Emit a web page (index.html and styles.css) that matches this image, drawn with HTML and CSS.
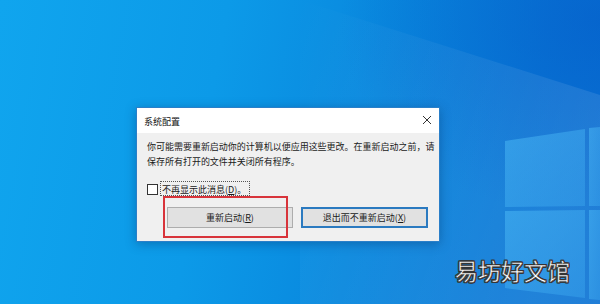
FILE: index.html
```html
<!DOCTYPE html>
<html lang="zh-CN">
<head>
<meta charset="utf-8">
<link rel="stylesheet" href="styles.css">
</head>
<body>
<div class="desktop">
  <svg class="wallpaper" width="600" height="304" viewBox="0 0 600 304">
    <defs>
      <linearGradient id="beam" x1="0" y1="0" x2="1" y2="0.4">
        <stop offset="0" stop-color="#ffffff" stop-opacity="0"/>
        <stop offset="1" stop-color="#ffffff" stop-opacity="0.10"/>
      </linearGradient>
      <linearGradient id="pane" x1="0" y1="0" x2="1" y2="1">
        <stop offset="0" stop-color="#4ab8f5" stop-opacity="0.55"/>
        <stop offset="1" stop-color="#3aa6ee" stop-opacity="0.45"/>
      </linearGradient>
    </defs>
    <polygon points="300,0 600,95 600,304 300,304" fill="url(#beam)"/>
    <polygon points="505,141 585,129 585,206 505,207" fill="url(#pane)"/>
    <polygon points="589,128 600,127 600,206 589,206" fill="url(#pane)"/>
    <polygon points="505,211 585,210 585,298 505,288" fill="url(#pane)"/>
    <polygon points="589,210 600,210 600,300 589,299" fill="url(#pane)"/>
  </svg>

  <div class="dialog">
    <div class="titlebar">
      <span class="title">系统配置</span>
      <svg class="close" width="10" height="10" viewBox="0 0 10 10">
        <path d="M1 1 L9 9 M9 1 L1 9" stroke="#333" stroke-width="1" fill="none"/>
      </svg>
    </div>
    <div class="body">
      <p class="message">你可能需要重新启动你的计算机以便应用这些更改。在重新启动之前，请保存所有打开的文件并关闭所有程序。</p>
      <div class="check-row">
        <span class="checkbox"></span>
        <span class="check-label">不再显示此消息(<u>D</u>)。</span>
      </div>
      <div class="buttons">
        <button class="btn">重新启动(<u>R</u>)</button>
        <button class="btn btn-default">退出而不重新启动(<u>X</u>)</button>
      </div>
    </div>
  </div>

  <div class="highlight"></div>
  <div class="watermark">易坊好文馆</div>
</div>
</body>
</html>
```
FILE: styles.css
```css
html, body {
  margin: 0;
  padding: 0;
}
body {
  width: 600px;
  height: 304px;
  overflow: hidden;
  font-family: "Noto Sans CJK SC", "Noto Sans", sans-serif;
}
.desktop {
  position: relative;
  width: 600px;
  height: 304px;
  background:
    radial-gradient(ellipse 260px 200px at 600px 20px, rgba(5, 90, 200, 0.55), rgba(5, 90, 200, 0)),
    linear-gradient(100deg, #10a5ee 0%, #0c9ae8 35%, #0988de 60%, #0877d6 85%, #0870d3 100%);
}
.wallpaper {
  position: absolute;
  left: 0;
  top: 0;
}
.dialog {
  position: absolute;
  left: 136px;
  top: 107px;
  width: 302px;
  height: 133px;
  border: 1px solid #2a7fc9;
  background: #f0f0f0;
  box-shadow: 0 2px 10px rgba(0, 40, 90, 0.35);
  display: flex;
  flex-direction: column;
}
.titlebar {
  height: 25px;
  background: #ffffff;
  display: flex;
  align-items: center;
  justify-content: space-between;
  padding: 0 7px 0 7px;
  flex: none;
}
.title {
  font-size: 9px;
  color: #111;
  margin-top: 1px;
}
.close {
  margin-top: -2px;
}
.body {
  padding: 6px 0 0 10px;
  display: flex;
  flex-direction: column;
}
.message {
  margin: 0;
  font-size: 9px;
  line-height: 15px;
  color: #1a1a1a;
  letter-spacing: -0.02px;
}
.check-row {
  display: flex;
  align-items: flex-end;
  margin-top: 12px;
  height: 15px;
}
.checkbox {
  width: 9px;
  height: 9px;
  border: 1px solid #333;
  background: #fff;
  flex: none;
  margin-bottom: 1px;
}
.check-label {
  font-size: 9px;
  color: #1a1a1a;
  margin-left: 2px;
  padding: 2px 3px 0 1px;
  border: 1px dotted #555;
  line-height: 11px;
}
.check-label u, .btn u {
  text-decoration: underline;
}
.buttons {
  display: flex;
  gap: 8px;
  margin-top: 11px;
  margin-left: 20px;
}
.btn {
  width: 126px;
  height: 21px;
  font-family: "Noto Sans CJK SC", "Noto Sans", sans-serif;
  font-size: 9px;
  color: #1a1a1a;
  background: #e1e1e1;
  border: 1px solid #adadad;
  padding: 0;
  margin: 0;
}
.btn-default {
  border: 2px solid #2b7ac0;
  width: 127px;
}
.highlight {
  position: absolute;
  left: 163px;
  top: 196px;
  width: 121px;
  height: 38px;
  border: 2px solid #d8343b;
}
.watermark {
  position: absolute;
  left: 455px;
  top: 254px;
  font-size: 23px;
  line-height: 32px;
  color: #ffffff;
  font-family: "Noto Sans CJK SC", sans-serif;
  -webkit-text-stroke: 0.5px #3a3a3a;
  text-shadow:
    1px 1px 0 #333, -1px -1px 0 #333, 1px -1px 0 #333, -1px 1px 0 #333,
    0 1px 0 #333, 0 -1px 0 #333, 1px 0 0 #333, -1px 0 0 #333;
}
```
